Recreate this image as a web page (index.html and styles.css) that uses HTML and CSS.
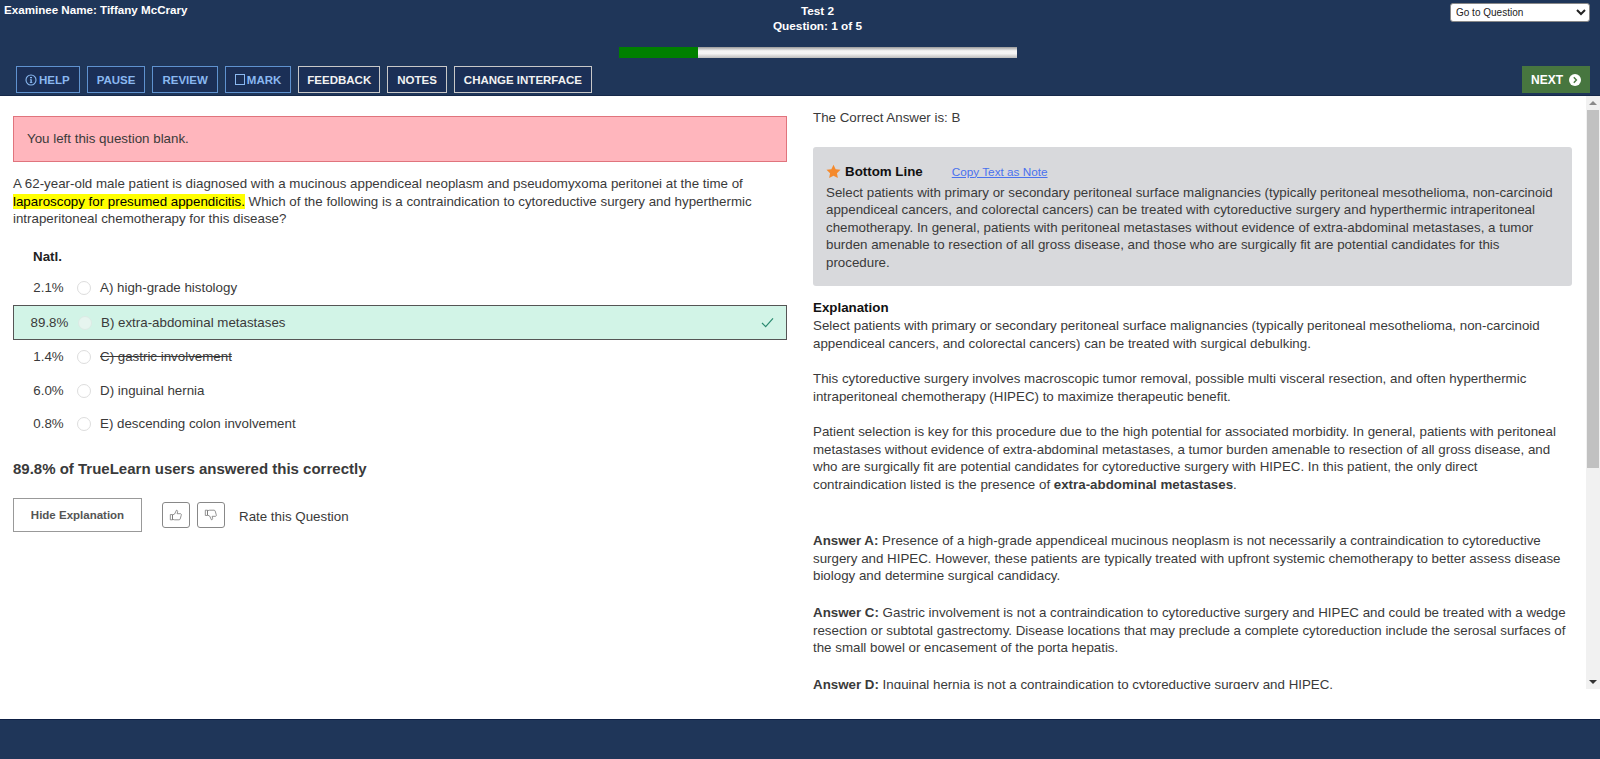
FILE: index.html
```html
<!DOCTYPE html>
<html lang="en">
<head>
<meta charset="utf-8">
<title>Test 2 - Question 1 of 5</title>
<link rel="stylesheet" href="styles.css">
</head>
<body>
<div class="app">
  <header class="header">
    <div class="top">
      <div class="examinee">Examinee Name: Tiffany McCrary</div>
      <div class="center">
        <div class="title">Test 2</div>
        <div class="title">Question: 1 of 5</div>
        <div class="progress"><div class="progress-fill"></div></div>
      </div>
      <div class="goto"><select class="goto-select"><option>Go to Question</option></select></div>
    </div>
    <div class="toolbar">
      <div class="tools">
        <button class="btn blue"><svg class="ico" viewBox="0 0 12 12"><circle cx="6" cy="6" r="5" fill="none" stroke="currentColor" stroke-width="1.1"/><path d="M5 3h2v1.3H5zM5 5.2h1.8V8.2H7.4V9H4.8V8.2H5.4V6H5z" fill="currentColor"/></svg>HELP</button>
        <button class="btn blue">PAUSE</button>
        <button class="btn blue">REVIEW</button>
        <button class="btn blue"><span class="check"></span>MARK</button>
        <button class="btn white narrow">FEEDBACK</button>
        <button class="btn white">NOTES</button>
        <button class="btn white">CHANGE INTERFACE</button>
      </div>
      <button class="next">NEXT<svg class="next-ico" viewBox="0 0 12 12"><circle cx="6" cy="6" r="6" fill="#fff"/><path d="M4.8 3.2 7.4 6 4.8 8.8" fill="none" stroke="#47763f" stroke-width="1.4"/></svg></button>
    </div>
  </header>
  <main class="main">
    <section class="left">
      <div class="alert">You left this question blank.</div>
      <p class="stem">A 62-year-old male patient is diagnosed with a mucinous appendiceal neoplasm and pseudomyxoma peritonei at the time of <mark class="hl">laparoscopy for presumed appendicitis.</mark> Which of the following is a contraindication to cytoreductive surgery and hyperthermic intraperitoneal chemotherapy for this disease?</p>
      <div class="natl">Natl.</div>
      <div class="choice"><span class="pct">2.1%</span><span class="radio"></span><span>A) high-grade histology</span></div>
      <div class="choice correct"><span class="pct">89.8%</span><span class="radio"></span><span>B) extra-abdominal metastases</span><svg class="tick" viewBox="0 0 14 12"><path d="M1 6.5 5 10.5 13 1.5" fill="none" stroke="#2a8a70" stroke-width="1.3"/></svg></div>
      <div class="choice"><span class="pct">1.4%</span><span class="radio"></span><s>C) gastric involvement</s></div>
      <div class="choice tight"><span class="pct">6.0%</span><span class="radio"></span><span>D) inguinal hernia</span></div>
      <div class="choice"><span class="pct">0.8%</span><span class="radio"></span><span>E) descending colon involvement</span></div>
      <div class="stat">89.8% of TrueLearn users answered this correctly</div>
      <div class="actions">
        <button class="hide">Hide Explanation</button>
        <button class="rate"><svg viewBox="0 0 16 16" class="thumb"><path d="M1.500 7.500h2.500v6H1.500zM4 8l2.500-1.200L8.500 2.500c1.200 0 1.600 1 1.300 2L9.300 6.500h3.700c1 0 1.400 1 1 1.800l-1.200 4.200c-.2.700-.7 1-1.400 1H6.500L4 13z" fill="none" stroke="#777" stroke-width=".9"/></svg></button>
        <button class="rate"><svg viewBox="0 0 16 16" class="thumb flip"><path d="M1.500 7.500h2.500v6H1.500zM4 8l2.500-1.200L8.500 2.500c1.200 0 1.600 1 1.300 2L9.300 6.500h3.700c1 0 1.400 1 1 1.800l-1.200 4.200c-.2.700-.7 1-1.400 1H6.500L4 13z" fill="none" stroke="#777" stroke-width=".9"/></svg></button>
        <span class="rate-label">Rate this Question</span>
      </div>
    </section>
    <section class="right">
      <div class="right-inner">
        <p class="answer">The Correct Answer is: B</p>
        <div class="bottom">
          <div class="bottom-head">
            <svg class="star" viewBox="0 0 24 24"><path d="M12 1l3.400 7.200 7.800 1-5.700 5.400 1.500 7.800L12 18.600 5 22.400l1.500-7.800L.8 9.200l7.800-1z" fill="#f58a2d"/></svg>
            <strong class="bottom-title">Bottom Line</strong>
            <a class="copy" href="#">Copy Text as Note</a>
          </div>
          <p class="bottom-text">Select patients with primary or secondary peritoneal surface malignancies (typically peritoneal mesothelioma, non-carcinoid appendiceal cancers, and colorectal cancers) can be treated with cytoreductive surgery and hyperthermic intraperitoneal chemotherapy. In general, patients with peritoneal metastases without evidence of extra-abdominal metastases, a tumor burden amenable to resection of all gross disease, and those who are surgically fit are potential candidates for this procedure.</p>
        </div>
        <div class="exp">
          <strong class="exp-title">Explanation</strong>
          <p class="para">Select patients with primary or secondary peritoneal surface malignancies (typically peritoneal mesothelioma, non-carcinoid appendiceal cancers, and colorectal cancers) can be treated with surgical debulking.</p>
          <p class="para">This cytoreductive surgery involves macroscopic tumor removal, possible multi visceral resection, and often hyperthermic intraperitoneal chemotherapy (HIPEC) to maximize therapeutic benefit.</p>
          <p class="para wide">Patient selection is key for this procedure due to the high potential for associated morbidity. In general, patients with peritoneal metastases without evidence of extra-abdominal metastases, a tumor burden amenable to resection of all gross disease, and who are surgically fit are potential candidates for cytoreductive surgery with HIPEC. In this patient, the only direct contraindication listed is the presence of <b>extra-abdominal metastases</b>.</p>
          <p class="para ans"><b>Answer A:</b> Presence of a high-grade appendiceal mucinous neoplasm is not necessarily a contraindication to cytoreductive surgery and HIPEC. However, these patients are typically treated with upfront systemic chemotherapy to better assess disease biology and determine surgical candidacy.</p>
          <p class="para ans"><b>Answer C:</b> Gastric involvement is not a contraindication to cytoreductive surgery and HIPEC and could be treated with a wedge resection or subtotal gastrectomy. Disease locations that may preclude a complete cytoreduction include the serosal surfaces of the small bowel or encasement of the porta hepatis.</p>
          <p class="para ans"><b>Answer D:</b> Inguinal hernia is not a contraindication to cytoreductive surgery and HIPEC.</p>
        </div>
      </div>
      <div class="scrollbar">
        <div class="arrow up"></div>
        <div class="thumb-bar"></div>
        <div class="arrow down"></div>
      </div>
    </section>
  </main>
  <footer class="footer"></footer>
</div>
</body>
</html>
```
FILE: styles.css
```css
* { box-sizing: border-box; }
html, body { margin: 0; height: 100%; overflow: hidden; }
body { font-family: "Liberation Sans", Arial, sans-serif; color: #3a3a3a; background: #fff; }
.app { height: 759px; display: flex; flex-direction: column; }
.header { height: 96px; background: #1f3659; border-bottom: 1px solid #16294a; color: #fff; display: flex; flex-direction: column; flex: none; }
.top { height: 65px; display: flex; }
.examinee { flex: 1; font-size: 11.6px; font-weight: 700; padding: 3px 0 0 4px; line-height: 14px; }
.center { width: 398px; text-align: center; margin-left: 41px; padding-top: 4px; }
.title { font-size: 11.8px; font-weight: 700; line-height: 15px; }
.progress { height: 11px; margin-top: 13px; background: linear-gradient(#999, #f4f4f4 35%, #f4f4f4 60%, #bbb); }
.progress-fill { width: 20%; height: 100%; background: #008000; }
.goto { flex: 1; display: flex; justify-content: flex-end; padding: 3px 10px 0 0; align-items: flex-start; }
.goto-select { width: 140px; height: 19px; font: 10px "Liberation Sans", Arial, sans-serif; color: #222; background: #fff; border: 1px solid #888; border-radius: 3px; padding: 0 0 0 1px; }
.toolbar { height: 30px; display: flex; justify-content: space-between; padding: 1px 10px 0 16px; }
.tools { display: flex; gap: 7px; }
.btn { height: 27px; background: #1b2f56; border: 1px solid; font: 700 11.5px "Liberation Sans", Arial, sans-serif; padding: 0 9px; display: flex; align-items: center; }
.btn.narrow { padding: 0 8px; }
.btn.blue { color: #8ab8f0; border-color: #5f92cf; }
.btn.white { color: #f2f2f2; border-color: #c8c8c8; }
.ico { width: 12px; height: 12px; margin: 0 2px 0 -1px; }
.check { width: 10px; height: 11px; border: 1px solid #8ab8f0; margin-right: 2px; }
.next { width: 68px; height: 27px; background: #47763f; color: #fff; border: 0; font: 700 12px "Liberation Sans", Arial, sans-serif; display: flex; align-items: center; justify-content: center; gap: 6px; padding: 0; }
.next-ico { width: 12px; height: 12px; }
.main { flex: none; height: 593px; display: flex; font-size: 13.33px; line-height: 17.5px; }
.left { width: 800px; flex: none; padding: 20px 13px 0 13px; }
.alert { height: 46px; background: #ffb6bd; border: 1px solid #e0747d; padding: 14px 13px 0; line-height: 16px; }
.stem { margin: 13px 0 0; }
.natl { font-weight: 700; margin: 21px 0 0 20px; line-height: 16px; color: #222; }
.choice { height: 34px; padding-top: 1px; display: flex; align-items: center; position: relative; }
.natl + .choice { margin-top: 6px; }
.pct { width: 57px; margin-left: 7px; text-align: center; }
.radio { width: 14px; height: 14px; flex: none; border: 1px solid #ddd; border-radius: 50%; margin-right: 9px; background: #fff; }
.correct { height: 35px; border: 1px solid #555; background: #d2f4e7; }
.tight { height: 33px; }
.correct .radio { background: #e6f5ef; border-color: #dcebe5; }
.tick { position: absolute; right: 12px; top: 11px; width: 13px; height: 11px; }
.stat { font-size: 15px; font-weight: 700; margin-top: 19px; line-height: 18px; }
.actions { display: flex; align-items: center; margin-top: 20px; }
.hide { width: 129px; height: 34px; background: #fff; border: 1px solid #999; font: 700 11.5px "Liberation Sans", Arial, sans-serif; color: #555; }
.rate { width: 28px; height: 26px; background: #fff; border: 1px solid #888; border-radius: 3px; padding: 0; margin-left: 7px; display: flex; align-items: center; justify-content: center; }
.hide + .rate { margin-left: 20px; }
.thumb { width: 14px; height: 14px; }
.flip { transform: rotate(180deg) scaleX(-1); }
.rate-label { margin: 4px 0 0 14px; }
.right { flex: 1; display: flex; min-width: 0; }
.right-inner { flex: 1; min-width: 0; overflow: hidden; padding: 13px 14px 0 13px; }
.answer { margin: 0; }
.bottom { margin-top: 20px; background: #d8d9dc; border-radius: 3px; padding: 16px 13px 12px; height: 139px; }
.bottom-head { display: flex; align-items: center; height: 18px; }
.star { width: 15px; height: 15px; margin-right: 4px; }
.bottom-title { font-size: 13.33px; color: #111; }
.copy { font-size: 11.75px; color: #4a72ee; margin-left: 29px; }
.bottom-text { margin: 3px 0 0; }
.exp { margin-top: 13px; }
.exp-title { color: #111; display: block; margin-bottom: 1px; }
.para { margin: 0 0 18px; }
.wide { margin-bottom: 39px; }
.ans { margin-bottom: 19.5px; }
.scrollbar { width: 14px; flex: none; background: #f1f1f1; display: flex; flex-direction: column; align-items: center; }
.arrow { height: 14px; flex: none; width: 100%; position: relative; }
.arrow.up::after { content: ""; position: absolute; left: 3px; top: 5px; border: 4px solid transparent; border-top: 0; border-bottom: 4px solid #8a8a8a; }
.arrow.down::after { content: ""; position: absolute; left: 3px; top: 5px; border: 4px solid transparent; border-bottom: 0; border-top: 4px solid #333; }
.thumb-bar { width: 12px; height: 358px; background: #c1c1c1; margin-bottom: auto; }
.footer { flex: 1; margin-top: 30px; background: #1f3659; border-top: 1px solid #0d1f44; }
```
